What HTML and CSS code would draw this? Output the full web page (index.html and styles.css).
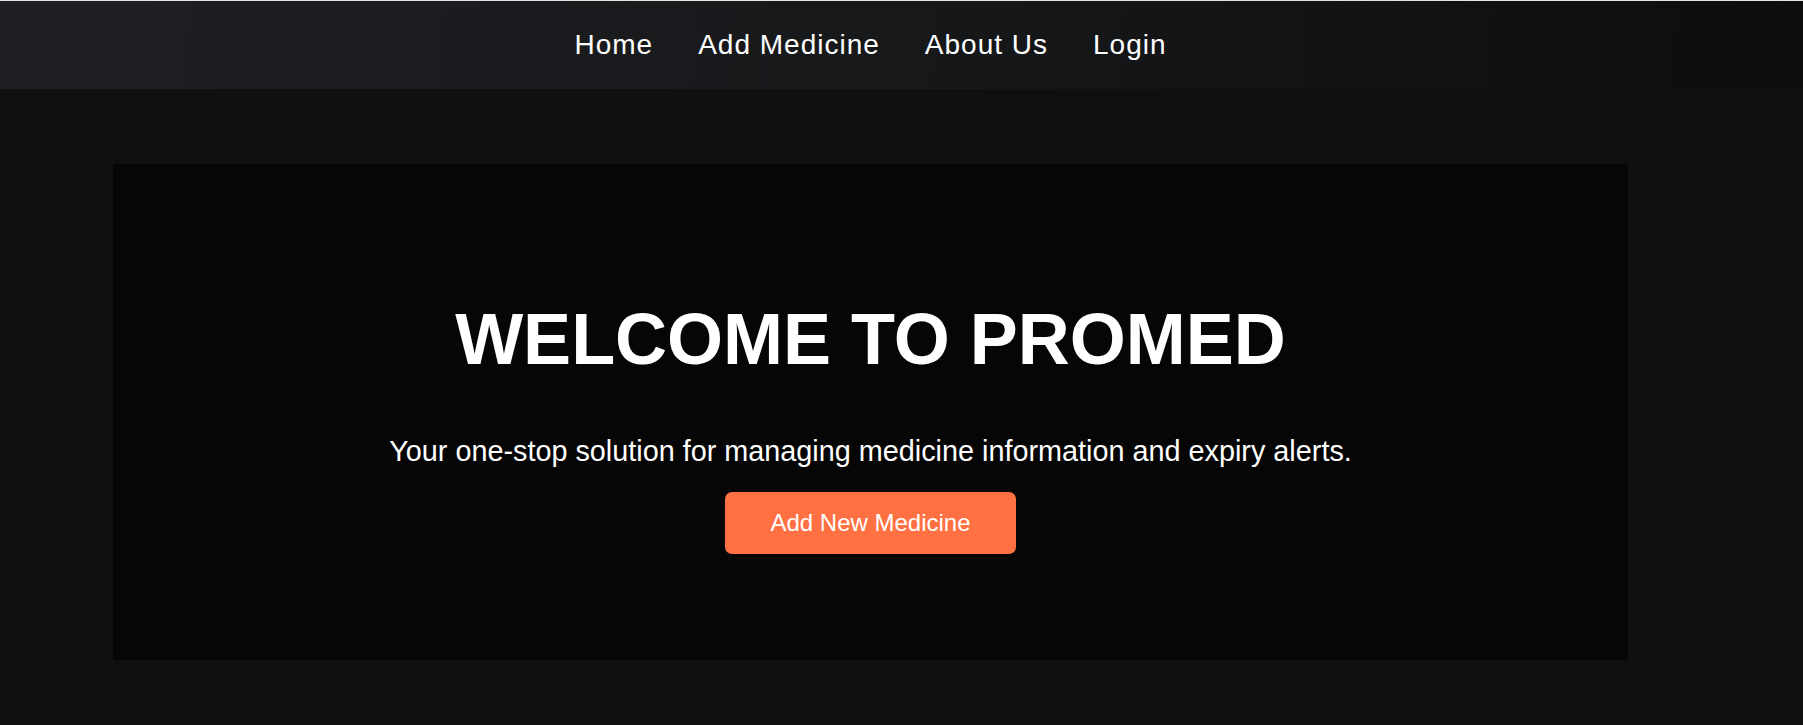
FILE: index.html
```html
<!DOCTYPE html>
<html lang="en">
<head>
<meta charset="utf-8">
<title>ProMed</title>
<link rel="stylesheet" href="styles.css">
</head>
<body>
<nav class="navbar">
  <ul class="nav-links">
    <li><a href="#">Home</a></li>
    <li><a href="#">Add Medicine</a></li>
    <li><a href="#">About Us</a></li>
    <li><a href="#">Login</a></li>
  </ul>
</nav>
<main class="main">
  <section class="hero">
    <h1 class="hero-title">WELCOME TO PROMED</h1>
    <p class="hero-text">Your one-stop solution for managing medicine information and expiry alerts.</p>
    <a class="hero-btn" href="#">Add New Medicine</a>
  </section>
</main>
</body>
</html>
```
FILE: styles.css
```css
* {
  box-sizing: border-box;
}

html, body {
  margin: 0;
  padding: 0;
}

body {
  background: #101010;
  color: #ffffff;
  font-family: "Liberation Sans", Arial, sans-serif;
  min-height: 725px;
}

.navbar {
  border-top: 1px solid #e4e4e4;
  height: 89px;
  background: linear-gradient(95deg, #1e2023 0%, #17181a 50%, #0d0d0d 100%);
  padding-right: 62px;
  display: flex;
  align-items: center;
  justify-content: center;
}

.nav-links {
  list-style: none;
  margin: 0;
  padding: 0;
  display: flex;
  gap: 45px;
}

.nav-links a {
  color: #ffffff;
  text-decoration: none;
  font-size: 28px;
  letter-spacing: 1px;
  line-height: 32px;
  display: block;
}

.main {
  padding: 75px 175px 0 113px;
}

.hero {
  background: #060606;
  height: 496px;
  padding-top: 134px;
  display: flex;
  flex-direction: column;
  align-items: center;
  text-align: center;
}

.hero-title {
  margin: 0 0 54px;
  font-size: 72px;
  font-weight: bold;
  line-height: 83px;
}

.hero-text {
  margin: 0 0 24px;
  font-size: 28.8px;
  line-height: 33px;
}

.hero-btn {
  display: inline-block;
  background: #ff7043;
  color: #ffffff;
  text-decoration: none;
  font-size: 24px;
  line-height: 28px;
  padding: 17px 45px;
  border-radius: 7px;
}
```
